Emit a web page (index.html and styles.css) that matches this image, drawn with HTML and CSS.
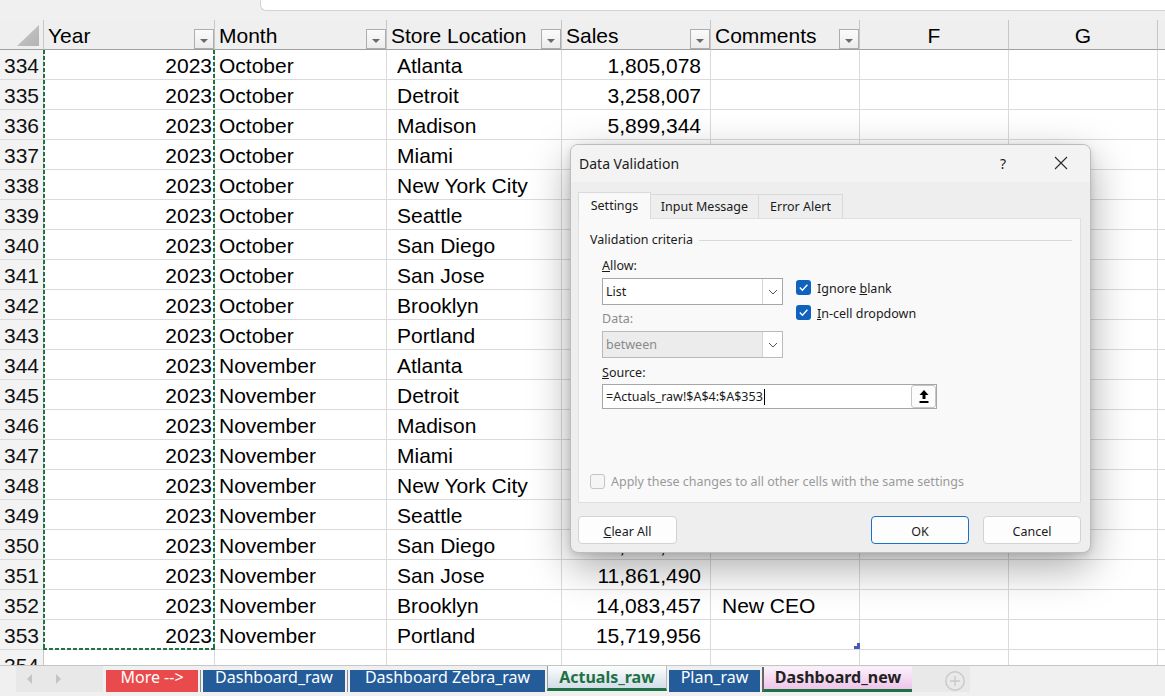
FILE: index.html
```html
<!DOCTYPE html>
<html>
<head>
<meta charset="utf-8">
<title>Data Validation</title>
<link rel="stylesheet" href="styles.css">
</head>
<body>
<div class="app">
  <div class="topbar"><div class="fx"></div></div>
  <div class="sheet">
    <div class="row hdr">
      <div class="corner"><span class="tri"></span></div>
      <div class="hc"><span class="hl">Year</span><span class="fb"></span></div>
      <div class="hc"><span class="hl">Month</span><span class="fb"></span></div>
      <div class="hc"><span class="hl">Store Location</span><span class="fb"></span></div>
      <div class="hc"><span class="hl">Sales</span><span class="fb"></span></div>
      <div class="hc"><span class="hl">Comments</span><span class="fb"></span></div>
      <div class="hc ctr"><span class="hl">F</span></div>
      <div class="hc ctr"><span class="hl">G</span></div>
      <div class="hc ctr"></div>
    </div>
    <div class="row"><div class="rh">334</div><div class="c a">2023</div><div class="c b">October</div><div class="c l">Atlanta</div><div class="c n">1,805,078</div><div class="c e"></div><div class="c"></div><div class="c"></div><div class="c"></div></div>
    <div class="row"><div class="rh">335</div><div class="c a">2023</div><div class="c b">October</div><div class="c l">Detroit</div><div class="c n">3,258,007</div><div class="c e"></div><div class="c"></div><div class="c"></div><div class="c"></div></div>
    <div class="row"><div class="rh">336</div><div class="c a">2023</div><div class="c b">October</div><div class="c l">Madison</div><div class="c n">5,899,344</div><div class="c e"></div><div class="c"></div><div class="c"></div><div class="c"></div></div>
    <div class="row"><div class="rh">337</div><div class="c a">2023</div><div class="c b">October</div><div class="c l">Miami</div><div class="c n"></div><div class="c e"></div><div class="c"></div><div class="c"></div><div class="c"></div></div>
    <div class="row"><div class="rh">338</div><div class="c a">2023</div><div class="c b">October</div><div class="c l">New York City</div><div class="c n"></div><div class="c e"></div><div class="c"></div><div class="c"></div><div class="c"></div></div>
    <div class="row"><div class="rh">339</div><div class="c a">2023</div><div class="c b">October</div><div class="c l">Seattle</div><div class="c n"></div><div class="c e"></div><div class="c"></div><div class="c"></div><div class="c"></div></div>
    <div class="row"><div class="rh">340</div><div class="c a">2023</div><div class="c b">October</div><div class="c l">San Diego</div><div class="c n"></div><div class="c e"></div><div class="c"></div><div class="c"></div><div class="c"></div></div>
    <div class="row"><div class="rh">341</div><div class="c a">2023</div><div class="c b">October</div><div class="c l">San Jose</div><div class="c n"></div><div class="c e"></div><div class="c"></div><div class="c"></div><div class="c"></div></div>
    <div class="row"><div class="rh">342</div><div class="c a">2023</div><div class="c b">October</div><div class="c l">Brooklyn</div><div class="c n"></div><div class="c e"></div><div class="c"></div><div class="c"></div><div class="c"></div></div>
    <div class="row"><div class="rh">343</div><div class="c a">2023</div><div class="c b">October</div><div class="c l">Portland</div><div class="c n"></div><div class="c e"></div><div class="c"></div><div class="c"></div><div class="c"></div></div>
    <div class="row"><div class="rh">344</div><div class="c a">2023</div><div class="c b">November</div><div class="c l">Atlanta</div><div class="c n"></div><div class="c e"></div><div class="c"></div><div class="c"></div><div class="c"></div></div>
    <div class="row"><div class="rh">345</div><div class="c a">2023</div><div class="c b">November</div><div class="c l">Detroit</div><div class="c n"></div><div class="c e"></div><div class="c"></div><div class="c"></div><div class="c"></div></div>
    <div class="row"><div class="rh">346</div><div class="c a">2023</div><div class="c b">November</div><div class="c l">Madison</div><div class="c n"></div><div class="c e"></div><div class="c"></div><div class="c"></div><div class="c"></div></div>
    <div class="row"><div class="rh">347</div><div class="c a">2023</div><div class="c b">November</div><div class="c l">Miami</div><div class="c n"></div><div class="c e"></div><div class="c"></div><div class="c"></div><div class="c"></div></div>
    <div class="row"><div class="rh">348</div><div class="c a">2023</div><div class="c b">November</div><div class="c l">New York City</div><div class="c n"></div><div class="c e"></div><div class="c"></div><div class="c"></div><div class="c"></div></div>
    <div class="row"><div class="rh">349</div><div class="c a">2023</div><div class="c b">November</div><div class="c l">Seattle</div><div class="c n"></div><div class="c e"></div><div class="c"></div><div class="c"></div><div class="c"></div></div>
    <div class="row"><div class="rh">350</div><div class="c a">2023</div><div class="c b">November</div><div class="c l">San Diego</div><div class="c n">10,372,598</div><div class="c e"></div><div class="c"></div><div class="c"></div><div class="c"></div></div>
    <div class="row"><div class="rh">351</div><div class="c a">2023</div><div class="c b">November</div><div class="c l">San Jose</div><div class="c n">11,861,490</div><div class="c e"></div><div class="c"></div><div class="c"></div><div class="c"></div></div>
    <div class="row"><div class="rh">352</div><div class="c a">2023</div><div class="c b">November</div><div class="c l">Brooklyn</div><div class="c n">14,083,457</div><div class="c e">New CEO</div><div class="c"></div><div class="c"></div><div class="c"></div></div>
    <div class="row"><div class="rh">353</div><div class="c a">2023</div><div class="c b">November</div><div class="c l">Portland</div><div class="c n">15,719,956</div><div class="c e"></div><div class="c"></div><div class="c"></div><div class="c"></div></div>
    <div class="row"><div class="rh">354</div><div class="c a"></div><div class="c b"></div><div class="c l"></div><div class="c n"></div><div class="c e"></div><div class="c"></div><div class="c"></div><div class="c"></div></div>
    <div class="sel"></div>
    <div class="handle"></div>
  </div>
  <div class="tabbar">
    <div class="nav">
      <svg class="arr" width="6" height="10" viewBox="0 0 6 10"><polygon points="5,0 5,10 0,5" fill="#c4c4c4"/></svg>
      <svg class="arr" width="6" height="10" viewBox="0 0 6 10"><polygon points="1,0 1,10 6,5" fill="#c4c4c4"/></svg>
    </div>
    <div class="tab red t-more">More --&gt;</div>
    <span class="sep"></span>
    <div class="tab blue t-dr">Dashboard_raw</div>
    <span class="sep"></span>
    <div class="tab blue t-zebra">Dashboard Zebra_raw</div>
    <div class="tab act">Actuals_raw</div>
    <div class="tab blue t-plan">Plan_raw</div>
    <div class="tab pink">Dashboard_new</div>
    <div class="add"><span class="plus"><svg width="20" height="20" viewBox="0 0 20 20"><circle cx="10" cy="10" r="9.2" fill="none" stroke="#c9c9c9" stroke-width="1.4"/><path d="M10 5v10M5 10h10" stroke="#c9c9c9" stroke-width="1.4"/></svg></span></div>
  </div>
</div>

<div class="dlg">
  <div class="dlg-title">
    <span class="ttl">Data Validation</span>
    <span class="help">?</span>
    <span class="close"><svg width="14" height="14" viewBox="0 0 14 14"><path d="M1 1L13 13M13 1L1 13" stroke="#2b2b2b" stroke-width="1.1"/></svg></span>
  </div>
  <div class="dlg-body">
    <div class="dtabs">
      <div class="dtab on w1">Settings</div>
      <div class="dtab w2">Input Message</div>
      <div class="dtab w3">Error Alert</div>
    </div>
    <div class="panel">
      <div class="legend"><span>Validation criteria</span><span class="rule"></span></div>
      <div class="crit">
        <div class="col">
          <div class="lbl"><u>A</u>llow:</div>
          <div class="combo"><span class="val">List</span><span class="dd"><svg width="10" height="6" viewBox="0 0 10 6"><polyline points="1,1 5,5 9,1" fill="none" stroke="#555" stroke-width="1"/></svg></span></div>
          <div class="lbl dis">Data:</div>
          <div class="combo off"><span class="val">between</span><span class="dd"><svg width="10" height="6" viewBox="0 0 10 6"><polyline points="1,1 5,5 9,1" fill="none" stroke="#555" stroke-width="1"/></svg></span></div>
        </div>
        <div class="checks">
          <div class="chk"><span class="box on"><svg width="15" height="15" viewBox="0 0 15 15"><polyline points="3.8,7.6 6.4,10.2 11.4,4.8" fill="none" stroke="#fff" stroke-width="1.4"/></svg></span><span>Ignore <u>b</u>lank</span></div>
          <div class="chk"><span class="box on"><svg width="15" height="15" viewBox="0 0 15 15"><polyline points="3.8,7.6 6.4,10.2 11.4,4.8" fill="none" stroke="#fff" stroke-width="1.4"/></svg></span><span><u>I</u>n-cell dropdown</span></div>
        </div>
      </div>
      <div class="lbl src"><u>S</u>ource:</div>
      <div class="inp"><span class="txt">=Actuals_raw!$A$4:$A$353</span><span class="caret"></span><span class="pick"><svg width="10" height="13" viewBox="0 0 10 13"><polygon points="5,0 9.5,5 6.5,5 6.5,9 3.5,9 3.5,5 0.5,5" fill="#000"/><rect x="0.5" y="11" width="9" height="2" fill="#000"/></svg></span></div>
      <div class="apply"><span class="box empty"></span><span>Apply these changes to all other cells with the same settings</span></div>
    </div>
    <div class="btns">
      <div class="btn"><u>C</u>lear All</div>
      <div class="btn ok">OK</div>
      <div class="btn">Cancel</div>
    </div>
  </div>
</div>
</body>
</html>
```

FILE: styles.css
```css
* { box-sizing: border-box; }
html, body { margin: 0; padding: 0; }
body {
  width: 1165px;
  height: 696px;
  overflow: hidden;
  position: relative;
  background: #fff;
  color: #000;
  font-family: "Liberation Sans", Arial, sans-serif;
}
.app { display: flex; flex-direction: column; height: 696px; }

/* top strip */
.topbar { height: 20px; flex: none; background: #f0f0f0; }
.fx {
  margin-left: 260px;
  height: 11px;
  background: #fff;
  border-left: 1px solid #d2d2d2;
  border-bottom: 1px solid #d2d2d2;
  border-bottom-left-radius: 6px;
}

/* grid */
.sheet { flex: 1; min-height: 0; overflow: hidden; position: relative; }
.row {
  display: grid;
  grid-template-columns: 44px 171px 172px 175px 149px 149px 149px 149px 149px;
  height: 30px;
  font-size: 21px;
}
.rh {
  background: #f3f3f3;
  border-right: 1px solid #c8c8c8;
  border-bottom: 1px solid #dadada;
  text-align: center;
  padding-top: 4px;
  line-height: 24px;
  color: #111;
}
.c {
  border-right: 1px solid #dadada;
  border-bottom: 1px solid #dadada;
  padding-top: 4px;
  line-height: 24px;
  white-space: nowrap;
  overflow: hidden;
  color: #000;
}
.a { text-align: right; padding-right: 2px; }
.b { padding-left: 4px; }
.l { padding-left: 10px; }
.n { text-align: right; padding-right: 9px; }
.e { padding-left: 11px; }

.hdr .hc, .corner {
  background: #efefef;
  border-right: 1px solid #c6c6c6;
  border-bottom: 1px solid #9f9f9f;
}
.hc { display: flex; align-items: flex-start; padding-left: 4px; }
.hc.ctr { justify-content: center; padding-left: 0; }
.hl { margin-top: 4px; line-height: 24px; white-space: nowrap; }
.fb {
  margin-left: auto;
  align-self: flex-end;
  width: 20px;
  height: 20px;
  flex: none;
  border: 1px solid #adadad;
  background: linear-gradient(#fbfbfb, #ececec);
  display: flex;
  align-items: center;
  justify-content: center;
}
.fb::after {
  content: "";
  border-left: 4px solid transparent;
  border-right: 4px solid transparent;
  border-top: 4px solid #6a6a6a;
  margin-top: 3px;
}
.corner { display: flex; justify-content: flex-end; align-items: flex-end; padding: 0 4px 3px 0; }
.tri {
  width: 22px;
  height: 21px;
  background: linear-gradient(135deg, #c9c9c9, #b3b3b3);
  clip-path: polygon(100% 0, 100% 100%, 0 100%);
}

/* copy marquee */
.sel {
  position: absolute;
  left: 43px;
  top: 30px;
  width: 172px;
  height: 600px;
  background:
    repeating-linear-gradient(to bottom, #217346 0 4px, transparent 4px 6px) 0 0 / 2px 100% no-repeat,
    repeating-linear-gradient(to bottom, #217346 0 4px, transparent 4px 6px) 100% 0 / 2px 100% no-repeat,
    repeating-linear-gradient(to right, #217346 0 4px, transparent 4px 6px) 0 100% / 100% 2px no-repeat;
}
.handle {
  position: absolute;
  left: 854px;
  top: 623px;
  width: 6px;
  height: 6px;
  background: #4759bd;
  clip-path: polygon(50% 0, 100% 0, 100% 100%, 0 100%, 0 50%, 50% 50%);
}

/* sheet tabs */
.tabbar {
  height: 31px;
  flex: none;
  border-top: 1px solid #c6c6c6;
  background: #f0f0f0;
  display: flex;
  align-items: flex-start;
  font-family: "Noto Sans", "Liberation Sans", sans-serif;
  font-size: 16px;
}
.nav {
  width: 87px;
  height: 26px;
  margin-left: 16px;
  background: #e8e8e8;
  display: flex;
  align-items: center;
  gap: 22px;
  padding-left: 11px;
}
.tab {
  height: 22px;
  margin-top: 4px;
  line-height: 14px;
  text-align: center;
  white-space: nowrap;
  color: #fff;
  flex: none;
}
.red { background: #e94b4c; }
.blue { background: #235c99; }
.t-more { width: 92px; margin-left: 3px; }
.t-dr { width: 142px; }
.t-zebra { width: 195px; }
.t-plan { width: 91px; margin-left: 2px; }
.sep { width: 1px; height: 22px; margin: 4px 2px 0; background: #8c8c8c; flex: none; }
.act {
  width: 120px;
  margin-left: 2px;
  margin-top: 0;
  height: 25px;
  padding-top: 4px;
  background: linear-gradient(#fdfdfd, #d2dde8);
  border-left: 1px solid #9a9a9a;
  border-right: 1px solid #bdbdbd;
  border-bottom: 3px solid #1e7145;
  color: #1e7145;
  font-weight: 700;
}
.pink {
  width: 150px;
  margin-left: 2px;
  margin-top: 1px;
  height: 25px;
  padding-top: 3px;
  background: linear-gradient(#fcf1fb, #edc4e9);
  border-left: 2px solid #666;
  border-bottom: 3px solid #1e7145;
  color: #222;
  font-weight: 700;
}
.add {
  width: 58px;
  height: 26px;
  background: #e9e9e9;
  padding: 5px 0 0 33px;
}
.plus { display: block; width: 20px; height: 20px; }
.plus svg { display: block; }

/* dialog */
.dlg {
  position: absolute;
  left: 570px;
  top: 144px;
  width: 521px;
  height: 409px;
  border: 1px solid #bdbdbd;
  border-radius: 8px;
  background: #eeeeee;
  box-shadow: 0 14px 42px rgba(0, 0, 0, 0.34), 0 2px 6px rgba(0, 0, 0, 0.12);
  overflow: hidden;
  font-family: "Noto Sans", "Open Sans", sans-serif;
  font-size: 12.5px;
  color: #1b1b1b;
  display: flex;
  flex-direction: column;
}
.dlg-title {
  height: 37px;
  flex: none;
  background: #f3f3f3;
  display: flex;
  align-items: center;
  padding-left: 8px;
  padding-bottom: 1px;
}
.ttl { font-size: 14px; }
.help { margin-left: auto; width: 20px; text-align: center; font-size: 14px; }
.close { width: 24px; margin-left: 36px; margin-right: 17px; display: flex; justify-content: center; }
.close svg { display: block; }

.dlg-body { flex: 1; padding: 0 9px 0 7px; display: flex; flex-direction: column; }
.dtabs { display: flex; align-items: flex-end; height: 26px; margin-top: 10px; position: relative; z-index: 1; }
.dtab {
  height: 24px;
  border: 1px solid #dadada;
  border-bottom: none;
  border-left: none;
  background: #eeeeee;
  text-align: center;
  line-height: 23px;
  white-space: nowrap;
}
.dtab.on {
  height: 27px;
  margin-bottom: -1px;
  border-left: 1px solid #dadada;
  background: #f9f9f9;
  line-height: 25px;
}
.w1 { width: 73px; }
.w2 { width: 108px; }
.w3 { width: 84px; }

.panel {
  height: 285px;
  border: 1px solid #e0e0e0;
  background: #f9f9f9;
  padding: 12px 8px 0 11px;
}
.legend { display: flex; align-items: center; height: 18px; line-height: 18px; }
.rule { flex: 1; height: 1px; background: #d9d9d9; margin-left: 6px; }
.crit { display: flex; margin: 8px 0 0 12px; }
.col { width: 181px; }
.lbl { height: 18px; line-height: 18px; }
.lbl.dis { margin-top: 5px; color: #8c8c8c; }
.combo {
  margin-top: 3px;
  height: 27px;
  border: 1px solid #a6a6a6;
  background: #fff;
  display: flex;
}
.combo .val { flex: 1; padding-left: 3px; line-height: 25px; }
.combo .dd {
  width: 20px;
  border-left: 1px solid #d4d4d4;
  background: #fff;
  display: flex;
  align-items: center;
  justify-content: center;
}
.combo.off { background: #ececec; border-color: #bababa; color: #8a8a8a; }
.checks { margin-left: 13px; padding-top: 23px; display: flex; flex-direction: column; gap: 10px; }
.chk { display: flex; align-items: center; height: 15px; gap: 6px; }
.chk span:last-child { margin-top: 2px; }
.box { width: 15px; height: 15px; border-radius: 3px; flex: none; display: block; }
.box svg { display: block; }
.box.on { background: #0f62be; }
.box.empty { border: 1px solid #c4c4c4; background: #f5f5f5; }
.src { margin: 6px 0 0 12px; }
.inp {
  margin: 2px 0 0 12px;
  width: 335px;
  height: 25px;
  border: 1px solid #a6a6a6;
  background: #fff;
  display: flex;
  align-items: center;
  padding-left: 3px;
}
.txt { white-space: nowrap; }
.caret { width: 1px; height: 16px; background: #000; margin-left: 1px; }
.pick {
  margin-left: auto;
  width: 25px;
  height: 23px;
  border: 1px solid #c6c6c6;
  border-radius: 3px;
  background: #fcfcfc;
  display: flex;
  align-items: center;
  justify-content: center;
}
.pick svg { display: block; }
.apply { margin-top: 65px; display: flex; align-items: center; gap: 6px; height: 15px; color: #9a9a9a; }

.btns { display: flex; margin-top: 13px; }
.btn {
  width: 98px;
  height: 28px;
  border: 1px solid #d2d2d2;
  border-radius: 4px;
  background: #fdfdfd;
  text-align: center;
  line-height: 27px;
  padding-top: 1px;
}
.btns .btn:first-child { width: 99px; }
.btn.ok { margin-left: auto; border-color: #1a6fc9; }
.btns .btn:last-child { margin-left: 14px; }
```
